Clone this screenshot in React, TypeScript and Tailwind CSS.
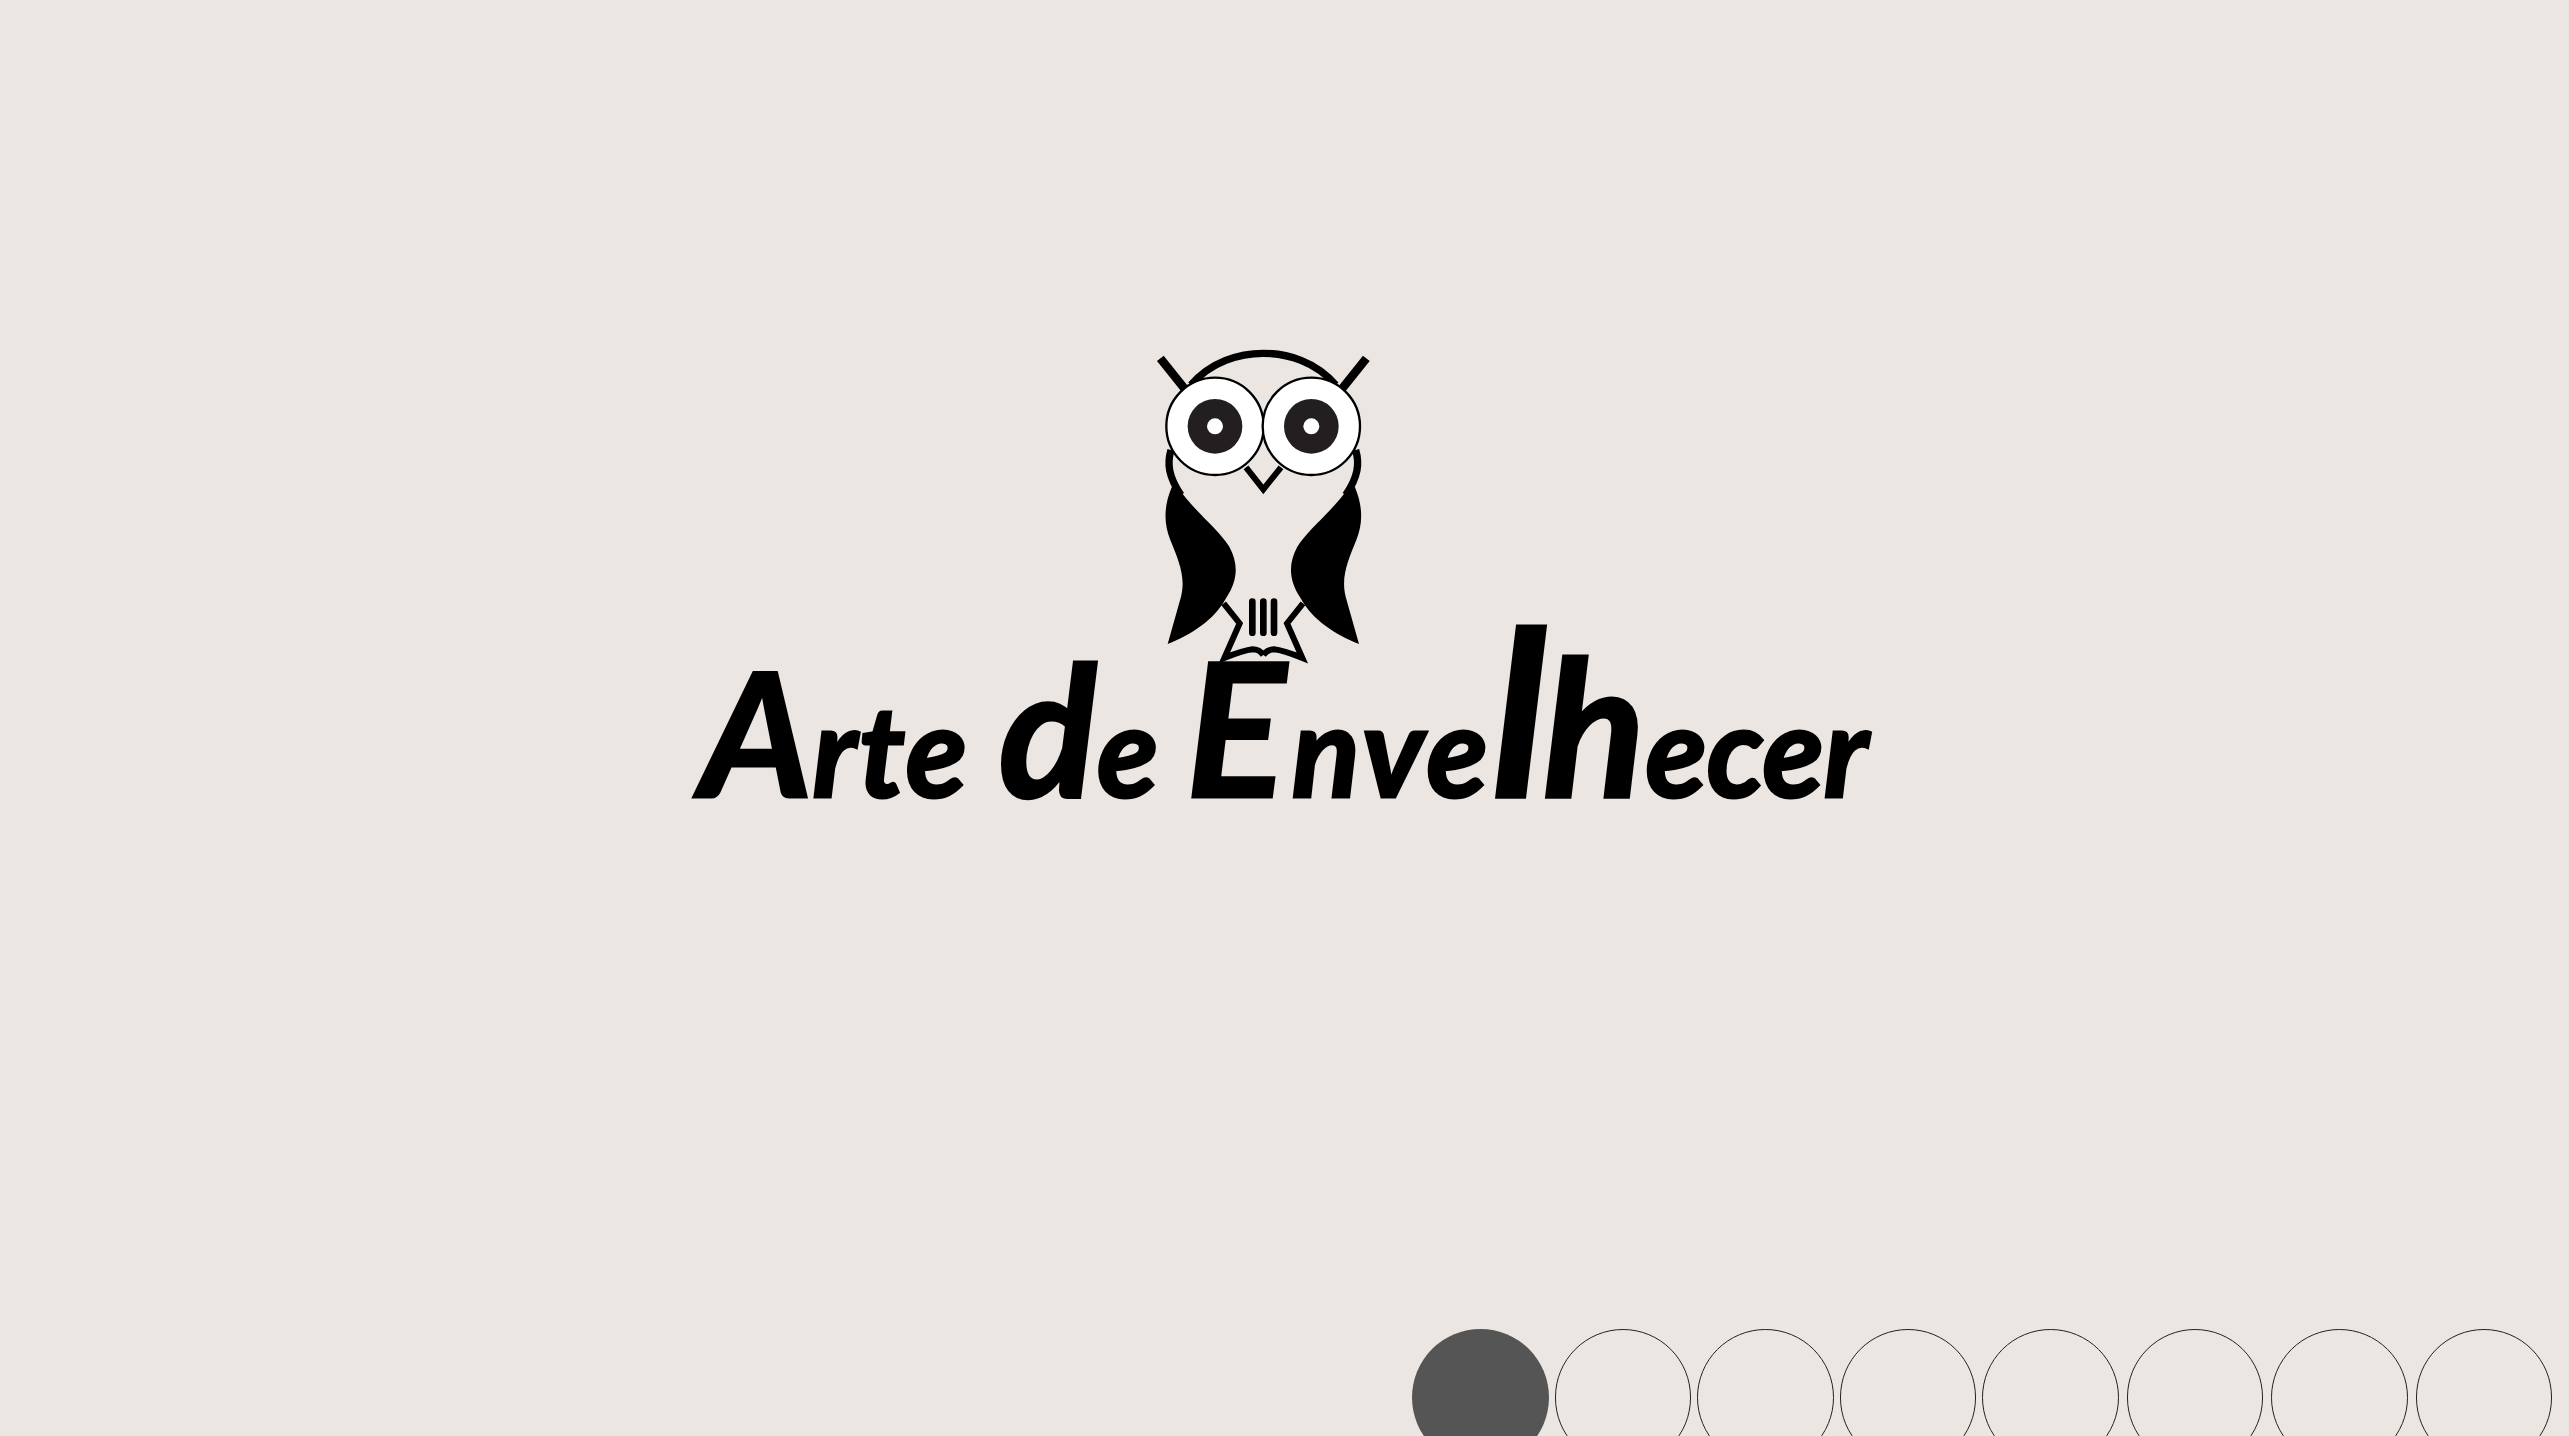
const Owl = () => {
  const side = (
    <>
      {/* ear */}
      <line x1="88" y1="85" x2="160" y2="175" stroke="#000" strokeWidth="26" />
      {/* side of the body */}
      <path d="M120 360 C108 400 112 440 150 495" fill="none" stroke="#000" strokeWidth="22" />
      {/* wing */}
      <path d="M122 472 C98 530 98 580 118 630 C142 690 165 740 150 800 L110 942 C180 915 250 870 285 805 C322 750 322 700 295 650 C260 595 190 545 135 465 Z" fill="#000" />
      {/* foot */}
      <path d="M278 820 L326 880 L280 984 C310 972 345 960 365 958 C380 958 390 965 397 975" fill="none" stroke="#000" strokeWidth="18" strokeMiterlimit="8" />
    </>
  );

  return (
    <svg viewBox="0 0 780 1020" className="w-[260px] h-[340px] shrink-0 mr-[48px]">
      {/* top of the head */}
      <path d="M180 165 C240 95 325 70 397 70 C469 70 554 95 614 165" fill="none" stroke="#000" strokeWidth="22" />
      {side}
      <g transform="translate(794 0) scale(-1 1)">{side}</g>
      {/* beak */}
      <path d="M345 412 L397 478 L450 412" fill="none" stroke="#000" strokeWidth="18" />
      {/* eyes */}
      <circle cx="252" cy="289" r="146" fill="#fff" stroke="#000" strokeWidth="7" />
      <circle cx="252" cy="289" r="82" fill="#231f20" />
      <circle cx="252" cy="289" r="24" fill="#fff" />
      <circle cx="541" cy="289" r="146" fill="#fff" stroke="#000" strokeWidth="7" />
      <circle cx="541" cy="289" r="82" fill="#231f20" />
      <circle cx="541" cy="289" r="24" fill="#fff" />
      {/* belly bars */}
      <path d="M364 815 V908 M397 815 V908 M429 815 V908" fill="none" stroke="#000" strokeWidth="20" strokeLinecap="round" />
    </svg>
  );
};

const dots = [
  'bg-[#555555]',
  'ml-[6px] border border-[#222222]',
  'ml-[6px] border border-[#222222]',
  'ml-[6px] border border-[#222222]',
  'ml-[6px] border border-[#222222]',
  'ml-[8px] border border-[#222222]',
  'ml-[8px] border border-[#222222]',
  'ml-[8px] border border-[#222222]',
];

const App = () => {
  return (
    <div className="flex flex-col h-screen w-full bg-[#ebe6e2] overflow-hidden text-black">
      <main className="flex-1 flex flex-col items-center pt-[330px]">
        <Owl />
        {/* Logotyp: wielkości liter dobrane do pisma odręcznego */}
        <h1 className="relative font-['Lato',sans-serif] italic font-bold text-[126px] leading-[190px] whitespace-nowrap -mt-[57px] [-webkit-text-stroke:3px_#000]">
          <span className="text-[172px]">A</span>
          <span className="tracking-[2px]">rte </span>
          <span className="text-[182px]">d</span>
          <span>e </span>
          <span className="text-[186px] tracking-[6px]">E</span>
          <span className="tracking-[4px]">nve</span>
          <span className="text-[230px] tracking-[-4px]">l</span>
          <span className="text-[190px]">h</span>
          <span>ecer</span>
        </h1>
      </main>

      {/* Kropki slajdów */}
      <footer className="h-[107px] shrink-0 overflow-hidden flex justify-end pr-[17px]">
        {dots.map((dot, i) => (
          <div key={i} className={`w-[136.5px] h-[137px] shrink-0 rounded-full ${dot}`} />
        ))}
      </footer>
    </div>
  );
};

export default App;
